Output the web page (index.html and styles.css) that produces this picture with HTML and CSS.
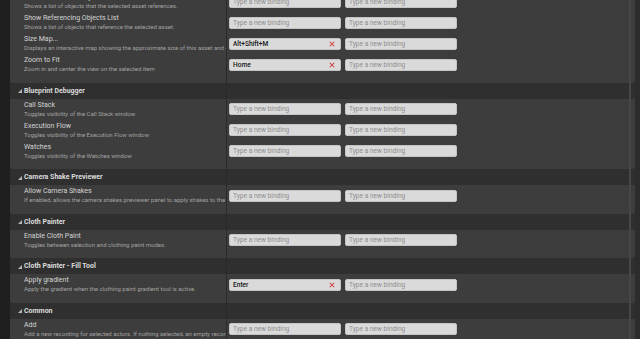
FILE: index.html
```html
<!DOCTYPE html>
<html>
<head>
<meta charset="utf-8">
<link rel="stylesheet" href="styles.css">
</head>
<body>
<div class="frame">
  <div class="strip-left"></div>
  <div class="panel">
    <div class="divider"></div>
    <div class="scroll-line"></div>

    <div class="section first">
      <div class="row">
        <div class="label"><div class="title">Show Referenced Objects List</div><div class="desc">Shows a list of objects that the selected asset references.</div></div>
        <div class="keys"><div class="key empty">Type a new binding</div><div class="key empty">Type a new binding</div></div>
      </div>
      <div class="row">
        <div class="label"><div class="title">Show Referencing Objects List</div><div class="desc">Shows a list of objects that reference the selected asset.</div></div>
        <div class="keys"><div class="key empty">Type a new binding</div><div class="key empty">Type a new binding</div></div>
      </div>
      <div class="row">
        <div class="label"><div class="title">Size Map...</div><div class="desc">Displays an interactive map showing the approximate size of this asset and everything it references</div></div>
        <div class="keys"><div class="key set"><span>Alt+Shift+M</span><svg class="x" viewBox="0 0 8 8"><path d="M1 1L7 7M7 1L1 7"/></svg></div><div class="key empty">Type a new binding</div></div>
      </div>
      <div class="row">
        <div class="label"><div class="title">Zoom to Fit</div><div class="desc">Zoom in and center the view on the selected item</div></div>
        <div class="keys"><div class="key set"><span>Home</span><svg class="x" viewBox="0 0 8 8"><path d="M1 1L7 7M7 1L1 7"/></svg></div><div class="key empty">Type a new binding</div></div>
      </div>
    </div>

    <div class="header"><svg class="arrow" viewBox="0 0 4 4"><polygon points="4,0 4,4 0,4"/></svg><span>Blueprint Debugger</span></div>
    <div class="section">
      <div class="row">
        <div class="label"><div class="title">Call Stack</div><div class="desc">Toggles visibility of the Call Stack window</div></div>
        <div class="keys"><div class="key empty">Type a new binding</div><div class="key empty">Type a new binding</div></div>
      </div>
      <div class="row">
        <div class="label"><div class="title">Execution Flow</div><div class="desc">Toggles visibility of the Execution Flow window</div></div>
        <div class="keys"><div class="key empty">Type a new binding</div><div class="key empty">Type a new binding</div></div>
      </div>
      <div class="row">
        <div class="label"><div class="title">Watches</div><div class="desc">Toggles visibility of the Watches window</div></div>
        <div class="keys"><div class="key empty">Type a new binding</div><div class="key empty">Type a new binding</div></div>
      </div>
    </div>

    <div class="header"><svg class="arrow" viewBox="0 0 4 4"><polygon points="4,0 4,4 0,4"/></svg><span>Camera Shake Previewer</span></div>
    <div class="section">
      <div class="row">
        <div class="label"><div class="title">Allow Camera Shakes</div><div class="desc">If enabled, allows the camera shakes previewer panel to apply shakes to the viewport</div></div>
        <div class="keys"><div class="key empty">Type a new binding</div><div class="key empty">Type a new binding</div></div>
      </div>
    </div>

    <div class="header"><svg class="arrow" viewBox="0 0 4 4"><polygon points="4,0 4,4 0,4"/></svg><span>Cloth Painter</span></div>
    <div class="section">
      <div class="row">
        <div class="label"><div class="title">Enable Cloth Paint</div><div class="desc">Toggles between selection and clothing paint modes.</div></div>
        <div class="keys"><div class="key empty">Type a new binding</div><div class="key empty">Type a new binding</div></div>
      </div>
    </div>

    <div class="header"><svg class="arrow" viewBox="0 0 4 4"><polygon points="4,0 4,4 0,4"/></svg><span>Cloth Painter - Fill Tool</span></div>
    <div class="section">
      <div class="row">
        <div class="label"><div class="title">Apply gradient</div><div class="desc">Apply the gradient when the clothing paint gradient tool is active.</div></div>
        <div class="keys"><div class="key set"><span>Enter</span><svg class="x" viewBox="0 0 8 8"><path d="M1 1L7 7M7 1L1 7"/></svg></div><div class="key empty">Type a new binding</div></div>
      </div>
    </div>

    <div class="header"><svg class="arrow" viewBox="0 0 4 4"><polygon points="4,0 4,4 0,4"/></svg><span>Common</span></div>
    <div class="section">
      <div class="row">
        <div class="label"><div class="title">Add</div><div class="desc">Add a new recording for selected actors. If nothing selected, an empty recording.</div></div>
        <div class="keys"><div class="key empty">Type a new binding</div><div class="key empty">Type a new binding</div></div>
      </div>
    </div>
  </div>
  <div class="strip-right"></div>
</div>
</body>
</html>
```

FILE: styles.css
```css
html, body {
  margin: 0;
  padding: 0;
  width: 640px;
  height: 339px;
  overflow: hidden;
  background: #1e1e1e;
  font-family: Roboto, "Liberation Sans", sans-serif;
}

.frame {
  display: flex;
  height: 339px;
  overflow: hidden;
}

.strip-left {
  width: 10px;
  flex: none;
  background: #1f1f1f;
}

.strip-right {
  width: 5px;
  flex: none;
  background: #2c2c2c;
}

.panel {
  position: relative;
  flex: 1;
  display: flex;
  flex-direction: column;
  background: #2f2f2f;
}

.divider {
  position: absolute;
  left: 216px;
  top: 0;
  bottom: 0;
  width: 1px;
  background: #2a2a2a;
  z-index: 2;
}

.scroll-line {
  position: absolute;
  right: 4px;
  top: 0;
  bottom: 0;
  width: 2px;
  background: #474747;
  z-index: 2;
}

.section {
  background: #3d3d3d;
  padding-bottom: 7.5px;
  border-radius: 0 0 3px 3px;
  flex: none;
}

.section.first {
  margin-top: -9px;
}

.header {
  height: 16px;
  flex: none;
  display: flex;
  align-items: center;
  padding-left: 8px;
  background: #2f2f2f;
  color: #dcdcdc;
  font-weight: bold;
  font-size: 7px;
}

.arrow {
  width: 4px;
  height: 4px;
  fill: #b8b8b8;
  margin-right: 2px;
  margin-top: 1px;
}

.row {
  height: 21px;
  display: grid;
  grid-template-columns: 216px 1fr;
}

.label {
  padding: 2px 0 0 14px;
  overflow: hidden;
  white-space: nowrap;
}

.title {
  font-size: 7px;
  line-height: 9px;
  color: #d4d4d4;
}

.desc {
  font-size: 6px;
  line-height: 8px;
  color: #a2a2a2;
}

.keys {
  display: flex;
  align-items: center;
  gap: 4px;
  padding-left: 3px;
}

.key {
  width: 112px;
  height: 12px;
  box-sizing: border-box;
  border: 1px solid #c4c4c4;
  border-radius: 2px;
  background: #dadada;
  display: flex;
  align-items: center;
  justify-content: space-between;
  padding: 0 5px 0 3px;
  font-size: 6.6px;
  white-space: nowrap;
}

.key.empty {
  color: #8e8e8e;
}

.key.set {
  color: #151515;
  font-weight: 500;
}

.x {
  width: 6px;
  height: 6px;
  stroke: #cf3535;
  stroke-width: 1.4;
  fill: none;
}
```
